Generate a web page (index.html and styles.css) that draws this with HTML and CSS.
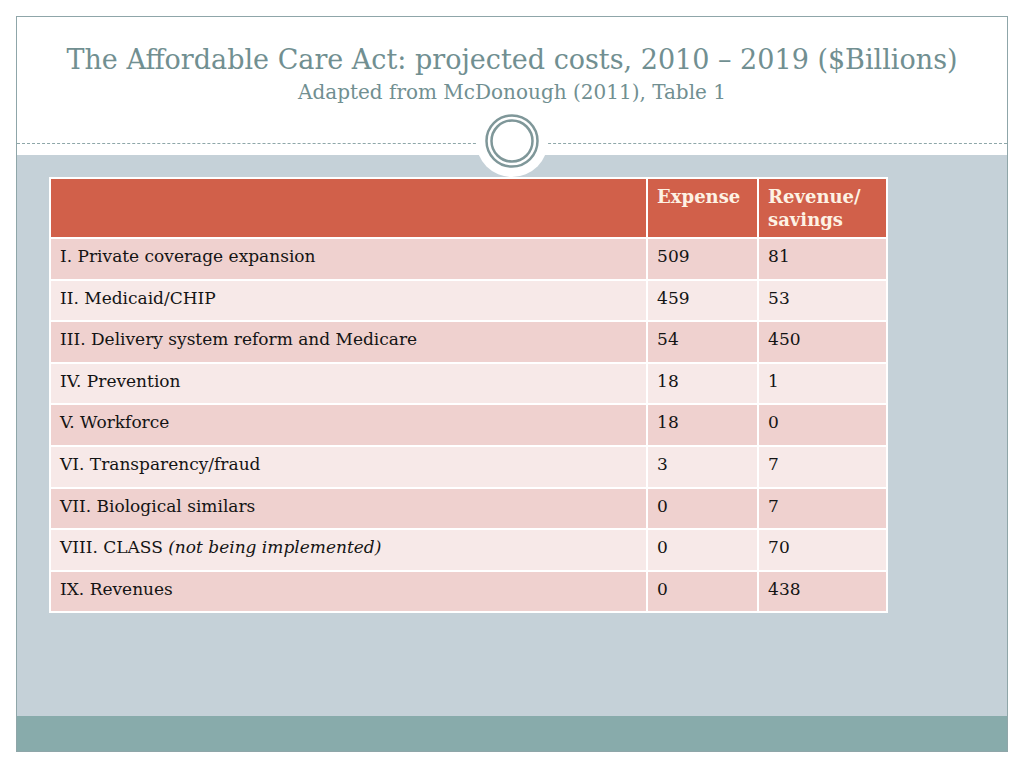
FILE: index.html
```html
<!DOCTYPE html>
<html>
<head>
<meta charset="utf-8">
<link rel="stylesheet" href="styles.css">
</head>
<body>
<div class="slide">
  <div class="head">
    <div class="titles">
      <div class="title">The Affordable Care Act: projected costs, 2010 – 2019 ($Billions)</div>
      <div class="subtitle">Adapted from McDonough (2011), Table 1</div>
    </div>
    <div class="rule"></div>
    <div class="badge">
      <svg width="72" height="72" viewBox="0 0 72 72">
        <circle cx="36" cy="36" r="36" fill="#ffffff"/>
        <circle cx="36" cy="36" r="25.5" fill="none" stroke="#7f9799" stroke-width="2.5"/>
        <circle cx="36" cy="36" r="20.5" fill="none" stroke="#7f9799" stroke-width="2.5"/>
      </svg>
    </div>
  </div>
  <div class="content">
    <table class="costs">
      <colgroup>
        <col class="c1"><col class="c2"><col class="c3">
      </colgroup>
      <thead>
        <tr><th></th><th>Expense</th><th>Revenue/<br>savings</th></tr>
      </thead>
      <tbody>
        <tr><td>I. Private coverage expansion</td><td>509</td><td>81</td></tr>
        <tr><td>II. Medicaid/CHIP</td><td>459</td><td>53</td></tr>
        <tr><td>III. Delivery system reform and Medicare</td><td>54</td><td>450</td></tr>
        <tr><td>IV. Prevention</td><td>18</td><td>1</td></tr>
        <tr><td>V. Workforce</td><td>18</td><td>0</td></tr>
        <tr><td>VI. Transparency/fraud</td><td>3</td><td>7</td></tr>
        <tr><td>VII. Biological similars</td><td>0</td><td>7</td></tr>
        <tr><td>VIII. CLASS <em>(not being implemented)</em></td><td>0</td><td>70</td></tr>
        <tr><td>IX. Revenues</td><td>0</td><td>438</td></tr>
      </tbody>
    </table>
  </div>
  <div class="foot"></div>
</div>
</body>
</html>
```

FILE: styles.css
```css
html, body {
  margin: 0;
  padding: 0;
  background: #ffffff;
}
body {
  width: 1024px;
  height: 768px;
  overflow: hidden;
  font-family: "DejaVu Serif", "Liberation Serif", serif;
}
.slide {
  margin: 16px 0 0 16px;
  width: 990px;
  height: 734px;
  border: 1px solid #8fa6a9;
  display: flex;
  flex-direction: column;
  position: relative;
}
.head {
  height: 138px;
  background: #ffffff;
  display: flex;
  flex-direction: column;
  position: relative;
}
.titles {
  padding-top: 27px;
  text-align: center;
  color: #718f91;
}
.title {
  font-size: 27px;
  line-height: 32px;
}
.subtitle {
  font-size: 20px;
  line-height: 22px;
  padding-top: 5px;
}
.rule {
  margin-top: auto;
  margin-bottom: 11px;
  border-top: 1px dashed #8ea7a9;
}
.badge {
  position: absolute;
  left: 459px;
  top: 88px;
  width: 72px;
  height: 72px;
  z-index: 2;
}
.badge svg {
  display: block;
}
.content {
  flex: 1;
  background: #c5d1d8;
  padding: 22px 0 0 32px;
}
.foot {
  height: 35px;
  background: #88abab;
}
.costs {
  border-collapse: collapse;
  width: 839px;
  font-size: 17px;
  color: #141414;
}
.c1 { width: 599px; }
.c2 { width: 111px; }
.c3 { width: 129px; }
.costs th,
.costs td {
  border: 2px solid #ffffff;
  text-align: left;
  vertical-align: top;
  padding: 6px 9px 0 9px;
}
.costs th {
  background: #d1604a;
  color: #fdf2e4;
  font-weight: bold;
  font-size: 18px;
  height: 52px;
  line-height: 23px;
}
.costs td {
  height: 33.6px;
  line-height: 22px;
}
.costs tbody tr:nth-child(odd) td {
  background: #efd1cf;
}
.costs tbody tr:nth-child(even) td {
  background: #f7e9e8;
}
.costs em {
  font-style: italic;
}
```
